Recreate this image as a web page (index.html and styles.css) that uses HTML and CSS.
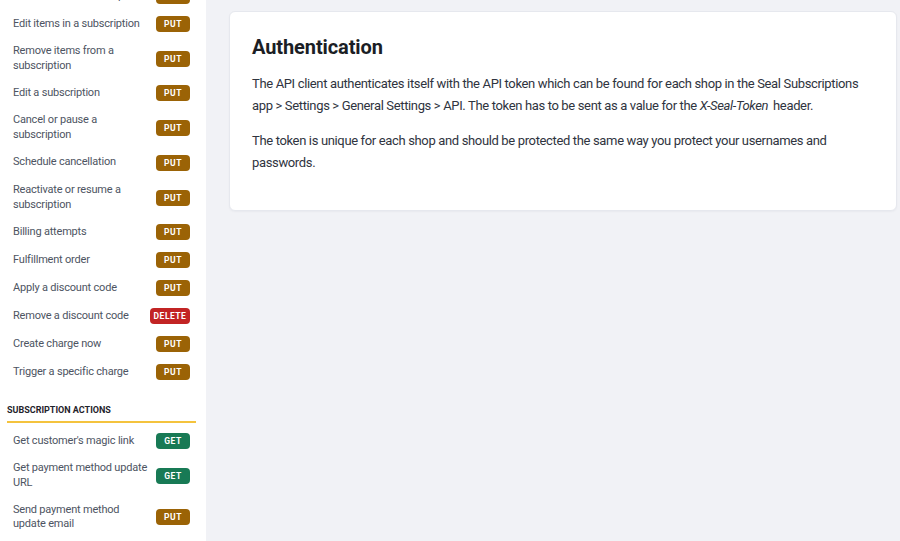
FILE: index.html
```html
<!DOCTYPE html>
<html lang="en">
<head>
<meta charset="utf-8">
<title>Seal Subscriptions API – Authentication</title>
<link rel="stylesheet" href="styles.css">
</head>
<body>
<div class="page">
  <aside class="sidebar">
    <div class="nav">
      <a class="row first"><span class="label">Add items to a subscription</span><span class="badge put">PUT</span></a>
      <a class="row"><span class="label">Edit items in a subscription</span><span class="badge put">PUT</span></a>
      <a class="row"><span class="label">Remove items from a subscription</span><span class="badge put">PUT</span></a>
      <a class="row"><span class="label">Edit a subscription</span><span class="badge put">PUT</span></a>
      <a class="row"><span class="label">Cancel or pause a subscription</span><span class="badge put">PUT</span></a>
      <a class="row"><span class="label">Schedule cancellation</span><span class="badge put">PUT</span></a>
      <a class="row"><span class="label">Reactivate or resume a subscription</span><span class="badge put">PUT</span></a>
      <a class="row"><span class="label">Billing attempts</span><span class="badge put">PUT</span></a>
      <a class="row"><span class="label">Fulfillment order</span><span class="badge put">PUT</span></a>
      <a class="row"><span class="label">Apply a discount code</span><span class="badge put">PUT</span></a>
      <a class="row"><span class="label">Remove a discount code</span><span class="badge delete">DELETE</span></a>
      <a class="row"><span class="label">Create charge now</span><span class="badge put">PUT</span></a>
      <a class="row"><span class="label">Trigger a specific charge</span><span class="badge put">PUT</span></a>
      <div class="section">SUBSCRIPTION ACTIONS</div>
      <a class="row"><span class="label">Get customer's magic link</span><span class="badge get">GET</span></a>
      <a class="row"><span class="label">Get payment method update URL</span><span class="badge get">GET</span></a>
      <a class="row"><span class="label">Send payment method update email</span><span class="badge put">PUT</span></a>
    </div>
  </aside>
  <main class="main">
    <section class="card">
      <h1 class="title">Authentication</h1>
      <p class="text">The API client authenticates itself with the API token which can be found for each shop in the Seal Subscriptions app &gt; Settings &gt; General Settings &gt; API. The token has to be sent as a value for the <em class="token">X-Seal-Token</em> header.</p>
      <p class="text">The token is unique for each shop and should be protected the same way you protect your usernames and passwords.</p>
    </section>
  </main>
</div>
</body>
</html>
```
FILE: styles.css
```css
html, body {
  margin: 0;
  padding: 0;
}
body {
  font-family: Roboto, "Liberation Sans", sans-serif;
  background: #f1f2f6;
  width: 900px;
  height: 541px;
  overflow: hidden;
}
.page {
  display: flex;
  height: 541px;
}
.sidebar {
  width: 206px;
  flex: 0 0 206px;
  background: #ffffff;
  overflow: hidden;
  height: 541px;
}
.nav {
  display: flex;
  flex-direction: column;
}
.row {
  display: flex;
  align-items: center;
  justify-content: space-between;
  gap: 6px;
  padding: 6px 16px 6px 13px;
  color: #4d5462;
  font-size: 11px;
  line-height: 14.7px;
  letter-spacing: -0.2px;
  text-decoration: none;
}
.row.first {
  margin-top: -18px;
}
.label {
  flex: 1 1 auto;
  min-width: 0;
}
.badge {
  flex: 0 0 auto;
  height: 16px;
  line-height: 16px;
  border-radius: 4px;
  color: #ffffff;
  font-size: 8.5px;
  font-weight: 700;
  letter-spacing: 0.5px;
  text-align: center;
}
.badge.put {
  width: 34px;
  background: #9b6306;
}
.badge.get {
  width: 34px;
  background: #187a55;
}
.badge.delete {
  width: 40px;
  background: #c22424;
}
.section {
  margin: 17px 10px 4px 7px;
  padding-bottom: 4px;
  border-bottom: 2px solid #f4c33d;
  font-size: 9px;
  line-height: 14px;
  font-weight: 700;
  color: #1f232b;
  letter-spacing: 0;
}
.main {
  flex: 1 1 auto;
  padding: 11px 3px 0 23px;
}
.card {
  background: #ffffff;
  border: 1px solid #e6e8ee;
  border-radius: 6px;
  padding: 21px 22px 36px 22px;
  box-shadow: 0 1px 2px rgba(20, 30, 60, 0.04);
}
.title {
  margin: 0 0 12px 0;
  font-size: 20px;
  line-height: 28px;
  font-weight: 700;
  color: #1b1e25;
  letter-spacing: -0.1px;
}
.text {
  margin: 0 0 13px 0;
  font-size: 13px;
  line-height: 22px;
  color: #2f3440;
  letter-spacing: -0.35px;
}
.token {
  padding-right: 2px;
}
.text:last-child {
  margin-bottom: 0;
}
```
